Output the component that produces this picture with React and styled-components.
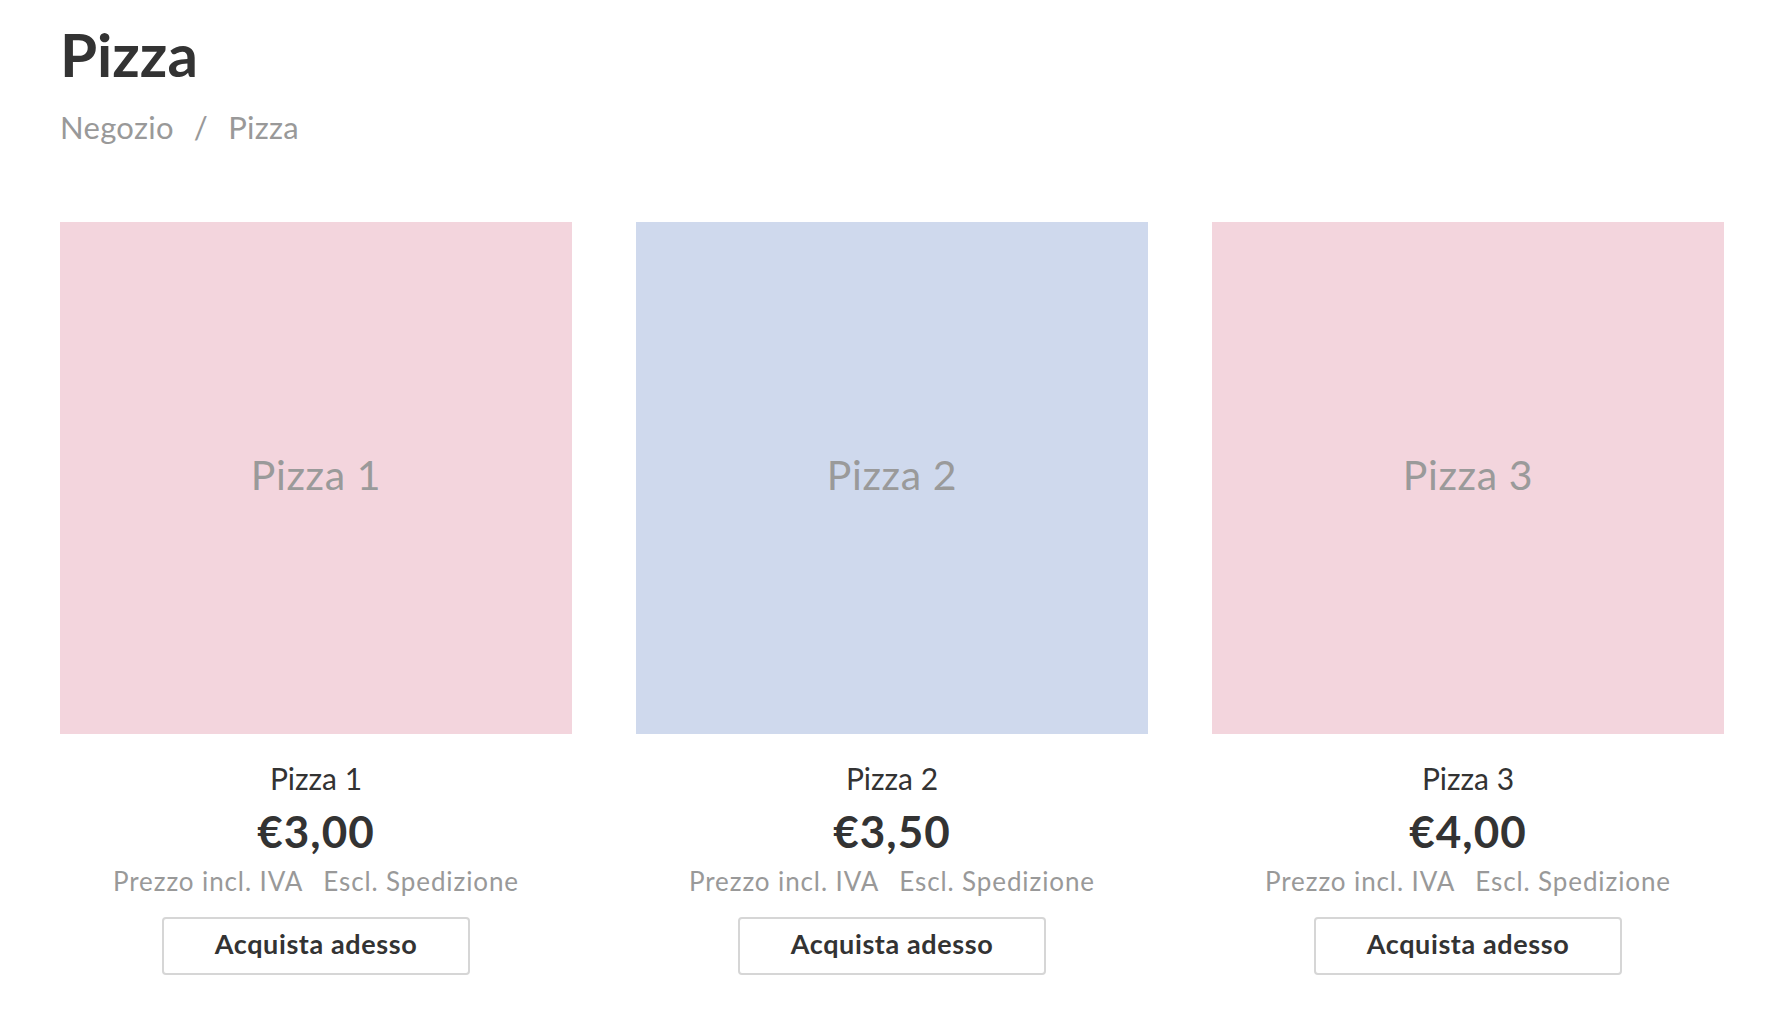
import React from "react";
import styled, { createGlobalStyle } from "styled-components";

const GlobalStyle = createGlobalStyle`
  body {
    margin: 0;
    background: #fff;
    font-family: Lato, "Open Sans", sans-serif;
    color: #333;
  }
`;

const Page = styled.div`
  padding: 18px 50px 40px 60px;
`;

const Title = styled.h1`
  margin: 0;
  font-size: 60px;
  line-height: 72px;
  font-weight: 700;
  color: #333;
`;

const Breadcrumb = styled.nav`
  margin-top: 19px;
  font-size: 31px;
  line-height: 36px;
  letter-spacing: 0.3px;
  color: #999;
  display: flex;
  gap: 20px;
`;

const Products = styled.div`
  margin-top: 77px;
  display: grid;
  grid-template-columns: repeat(3, 512px);
  gap: 64px;
`;

const Card = styled.div`
  display: flex;
  flex-direction: column;
  align-items: center;
`;

const Placeholder = styled.div`
  width: 512px;
  height: 512px;
  background: ${(p) => p.$bg};
  display: flex;
  align-items: center;
  justify-content: center;
  box-sizing: border-box;
  padding-bottom: 7px;
  font-size: 41px;
  letter-spacing: 0.6px;
  color: #9a9a9a;
`;

const Name = styled.div`
  margin-top: 26px;
  font-size: 30px;
  line-height: 36px;
  color: #333;
`;

const Price = styled.div`
  margin-top: 10px;
  font-size: 44px;
  line-height: 50px;
  letter-spacing: 1px;
  font-weight: 700;
  color: #333;
`;

const Notes = styled.div`
  margin-top: 10px;
  display: flex;
  gap: 20px;
  font-size: 26px;
  line-height: 30px;
  letter-spacing: 0.9px;
  color: #999;
`;

const BuyButton = styled.button`
  margin-top: 21px;
  width: 308px;
  height: 58px;
  box-sizing: border-box;
  padding: 0 0 6px;
  border: 2px solid #d6d6d6;
  border-radius: 4px;
  background: #fff;
  font-family: inherit;
  font-size: 27px;
  letter-spacing: 0.6px;
  font-weight: 700;
  color: #333;
  cursor: pointer;
`;

const products = [
  { name: "Pizza 1", price: "€3,00", bg: "#f3d5dd" },
  { name: "Pizza 2", price: "€3,50", bg: "#cfd9ed" },
  { name: "Pizza 3", price: "€4,00", bg: "#f3d5dd" },
];

export default function App() {
  return (
    <Page>
      <GlobalStyle />
      <Title>Pizza</Title>
      <Breadcrumb>
        <span>Negozio</span>
        <span>/</span>
        <span>Pizza</span>
      </Breadcrumb>
      <Products>
        {products.map((p) => (
          <Card key={p.name}>
            <Placeholder $bg={p.bg}>{p.name}</Placeholder>
            <Name>{p.name}</Name>
            <Price>{p.price}</Price>
            <Notes>
              <span>Prezzo incl. IVA</span>
              <span>Escl. Spedizione</span>
            </Notes>
            <BuyButton>Acquista adesso</BuyButton>
          </Card>
        ))}
      </Products>
    </Page>
  );
}
